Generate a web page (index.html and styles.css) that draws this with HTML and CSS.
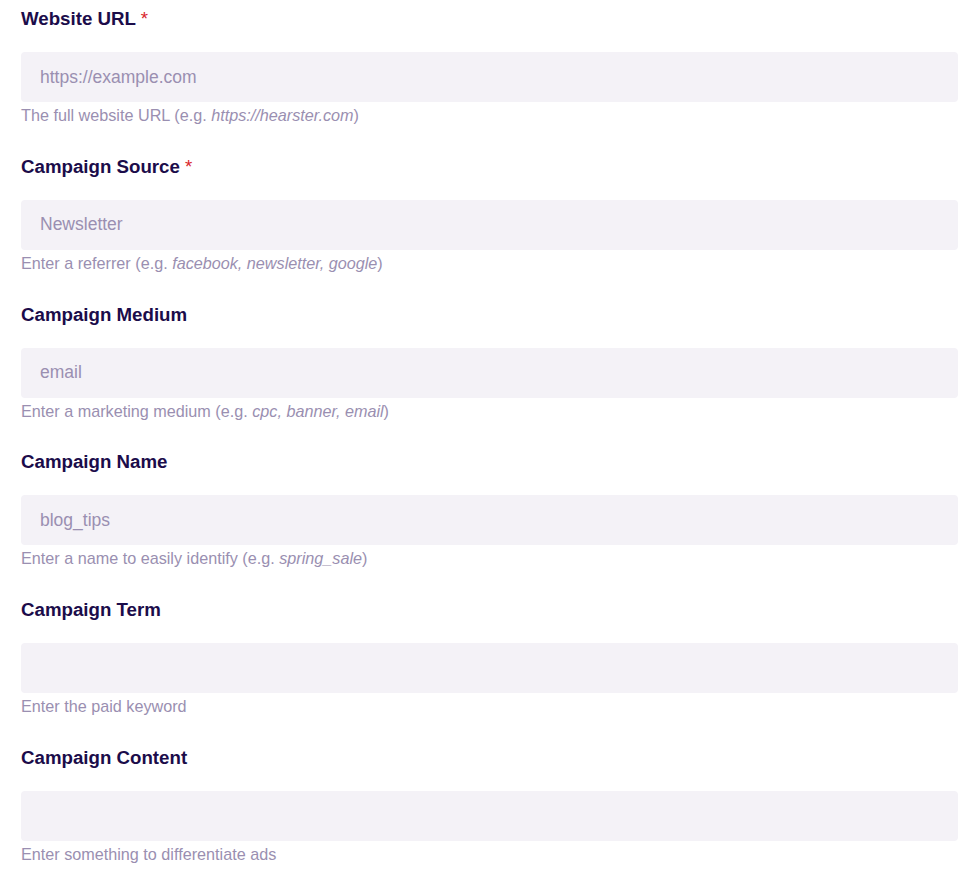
FILE: index.html
```html
<!DOCTYPE html>
<html>

<head>
    <title>Campaign URL Builder</title>
    <meta name="viewport" content="width=device-width, initial-scale=1" />
    <link rel="stylesheet" href="styles.css">
</head>

<body>
    <form class="builder">
        <div class="field">
            <label for="url">Website URL <span class="req">*</span></label>
            <input type="text" id="url" placeholder="https://example.com" />
            <p class="help">The full website URL (e.g. <em>https://hearster.com</em>)</p>
        </div>
        <div class="field">
            <label for="source">Campaign Source <span class="req">*</span></label>
            <input type="text" id="source" placeholder="Newsletter" />
            <p class="help">Enter a referrer (e.g. <em>facebook, newsletter, google</em>)</p>
        </div>
        <div class="field">
            <label for="medium">Campaign Medium</label>
            <input type="text" id="medium" placeholder="email" />
            <p class="help">Enter a marketing medium (e.g. <em>cpc, banner, email</em>)</p>
        </div>
        <div class="field">
            <label for="name">Campaign Name</label>
            <input type="text" id="name" placeholder="blog_tips" />
            <p class="help">Enter a name to easily identify (e.g. <em>spring_sale</em>)</p>
        </div>
        <div class="field">
            <label for="term">Campaign Term</label>
            <input type="text" id="term" />
            <p class="help">Enter the paid keyword</p>
        </div>
        <div class="field">
            <label for="content">Campaign Content</label>
            <input type="text" id="content" />
            <p class="help">Enter something to differentiate ads</p>
        </div>
    </form>
</body>

</html>
```

FILE: styles.css
```css
html {
    font-family: "Liberation Sans", Arial, Helvetica, sans-serif;
}

body {
    margin: 0;
    overflow: hidden;
}

.builder {
    padding: 7px 12px 0 21px;
}

.field {
    margin-bottom: 27.8px;
}

.field:last-child {
    margin-bottom: 0;
}

label {
    display: block;
    font-size: 18.7px;
    line-height: 24px;
    font-weight: bold;
    color: #1b0c4a;
    margin-bottom: 21px;
}

.req {
    color: #d9262c;
    font-weight: normal;
}

input {
    display: block;
    box-sizing: border-box;
    width: 100%;
    height: 50px;
    padding: 0 19px;
    border: none;
    border-radius: 4px;
    background-color: #f4f2f7;
    font-family: inherit;
    font-size: 17.5px;
    color: #1b0c4a;
    outline: none;
}

input::placeholder {
    color: #9a8fb1;
    opacity: 1;
}

.help {
    margin: 1px 0 0;
    font-size: 16.2px;
    line-height: 24px;
    color: #9a8fb1;
}

.help em {
    font-style: italic;
}
```
